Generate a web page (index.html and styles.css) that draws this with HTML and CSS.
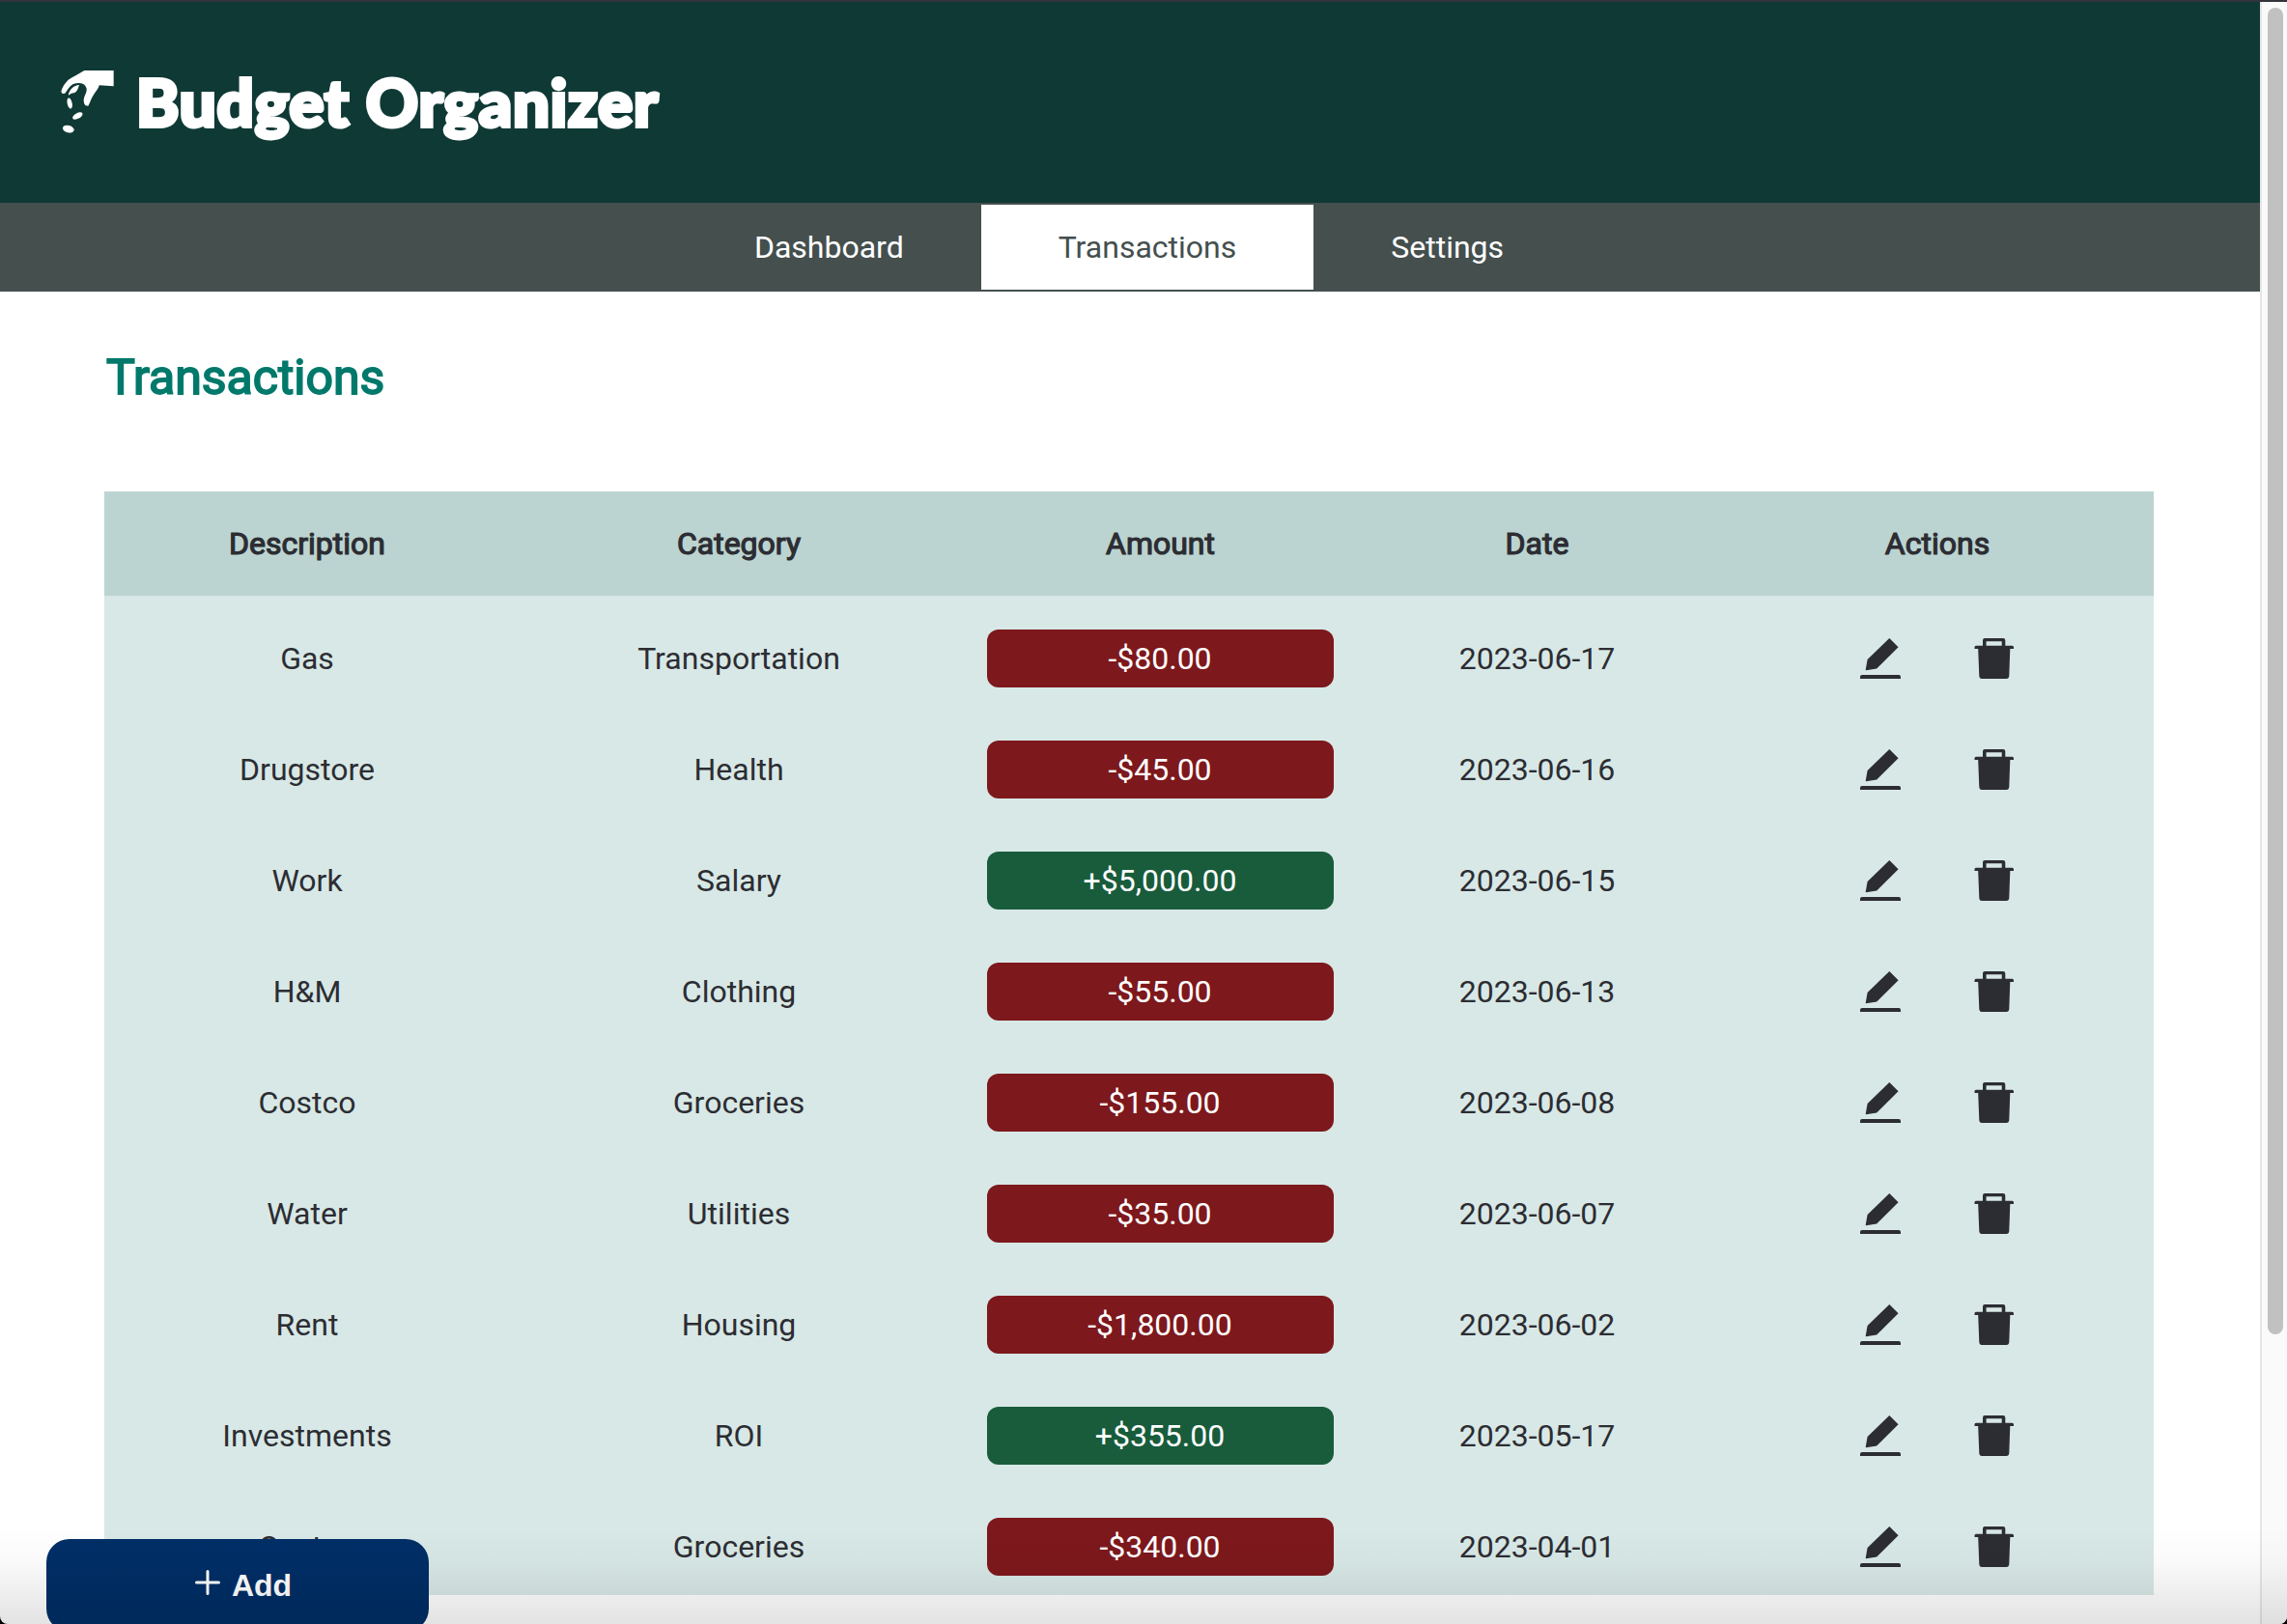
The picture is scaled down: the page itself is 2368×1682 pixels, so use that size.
FILE: index.html
```html
<!DOCTYPE html>
<html lang="en">
<head>
<meta charset="utf-8">
<title>Budget Organizer</title>
<link rel="stylesheet" href="styles.css">
</head>
<body>
<svg class="symbols" aria-hidden="true">
  <symbol id="pen" viewBox="0 0 42 42"><path d="M30.3 0 39.6 9.3 17.2 31.4 6.2 33.2 5.7 32.7 7.6 21.9z"/><path d="M2 38H40Q42 38 42 40V42H0V40Q0 38 2 38z"/></symbol>
  <symbol id="trash" viewBox="0 0 42 42"><path fill-rule="evenodd" d="M11 0H30Q32.3 0 32.3 2.300V7.700H39.500Q41 7.700 41 9.200V11H37.300L36.300 39Q36.100 42 33.500 42H8Q5.500 42 5.300 39L4.200 11H.5V9.200Q.5 7.700 2 7.700H9V2.300Q9 0 11 0zM12.600 3.200V7.700H28.700V3.200z"/></symbol>
</svg>
<div class="window">
  <div class="page">
    <header class="header">
      <svg class="logo" viewBox="0 0 240 270"><path d="M112 39H203V88L158 85C156 96 148 103 138 119C131 130 129 141 124 149L116 148C108 139 109 126 114 116C118 107 121 99 118 92C112 77 93 75 76 82C66 87 60 99 53 109C48 114 41 110 40 104C43 90 52 78 62 68C77 59 95 49 112 39z"/><path d="M63 111C68 98 79 85 96 84C93 94 89 107 79 109C73 109 68 113 63 116z"/><ellipse cx="66.500" cy="141" rx="7.500" ry="17" transform="rotate(-12 66.500 141)"/><ellipse cx="91" cy="180" rx="17" ry="8.500" transform="rotate(-28 91 180)"/><ellipse cx="62.500" cy="221" rx="18" ry="11" transform="rotate(14 62.500 221)"/></svg>
      <h1 class="brand">Budget Organizer</h1>
    </header>
    <nav class="nav">
      <a class="tab">Dashboard</a>
      <a class="tab active">Transactions</a>
      <a class="tab">Settings</a>
    </nav>
    <main class="main">
      <h2 class="title">Transactions</h2>
      <div class="table">
        <div class="row head"><span>Description</span><span>Category</span><span>Amount</span><span>Date</span><span>Actions</span></div>
        <div class="row"><span>Gas</span><span>Transportation</span><span class="amount out">-$80.00</span><span>2023-06-17</span><span class="actions"><svg><use href="#pen"/></svg><svg><use href="#trash"/></svg></span></div>
        <div class="row"><span>Drugstore</span><span>Health</span><span class="amount out">-$45.00</span><span>2023-06-16</span><span class="actions"><svg><use href="#pen"/></svg><svg><use href="#trash"/></svg></span></div>
        <div class="row"><span>Work</span><span>Salary</span><span class="amount in">+$5,000.00</span><span>2023-06-15</span><span class="actions"><svg><use href="#pen"/></svg><svg><use href="#trash"/></svg></span></div>
        <div class="row"><span>H&amp;M</span><span>Clothing</span><span class="amount out">-$55.00</span><span>2023-06-13</span><span class="actions"><svg><use href="#pen"/></svg><svg><use href="#trash"/></svg></span></div>
        <div class="row"><span>Costco</span><span>Groceries</span><span class="amount out">-$155.00</span><span>2023-06-08</span><span class="actions"><svg><use href="#pen"/></svg><svg><use href="#trash"/></svg></span></div>
        <div class="row"><span>Water</span><span>Utilities</span><span class="amount out">-$35.00</span><span>2023-06-07</span><span class="actions"><svg><use href="#pen"/></svg><svg><use href="#trash"/></svg></span></div>
        <div class="row"><span>Rent</span><span>Housing</span><span class="amount out">-$1,800.00</span><span>2023-06-02</span><span class="actions"><svg><use href="#pen"/></svg><svg><use href="#trash"/></svg></span></div>
        <div class="row"><span>Investments</span><span>ROI</span><span class="amount in">+$355.00</span><span>2023-05-17</span><span class="actions"><svg><use href="#pen"/></svg><svg><use href="#trash"/></svg></span></div>
        <div class="row"><span>Costco</span><span>Groceries</span><span class="amount out">-$340.00</span><span>2023-04-01</span><span class="actions"><svg><use href="#pen"/></svg><svg><use href="#trash"/></svg></span></div>
      </div>
    </main>
  </div>
  <div class="scrollbar"><div class="thumb"></div></div>
  <button class="add"><svg viewBox="0 0 26 26"><path d="M13 1.500V24.500M1.500 13H24.500"/></svg>Add</button>
  <div class="shade"></div>
</div>
</body>
</html>
```

FILE: styles.css
```css
* { box-sizing: border-box; }
body { margin: 0; background: #000; overflow: hidden; font-family: Roboto, sans-serif; font-size: 32px; color: #2c2d33; }
.symbols { display: none; }
.window { position: relative; display: flex; height: 1682px; overflow: hidden; background: #fff; border-top: 2px solid #33343c; border-radius: 0 0 8px 8px; }
.page { width: 2340px; }
.header { display: flex; align-items: flex-start; height: 208px; padding: 58px 50px 0; background: #0f3935; }
.logo { width: 80px; height: 90px; fill: #fff; }
.brand { margin: 0 0 0 11px; font: 900 67px/90px Lato, sans-serif; letter-spacing: .85px; color: #fff; -webkit-text-stroke: 4px #fff; white-space: nowrap; }
.nav { display: flex; justify-content: center; height: 92px; padding: 2px 2px 2px 0; background: #444f4e; }
.tab { display: flex; align-items: center; padding: 0 80px; color: #fff; }
.tab.active { background: #fff; color: #444f4e; }
.main { padding: 54px 110px 0 108px; }
.title { margin: 0; padding-left: 2px; height: 153px; font-size: 50px; line-height: 70px; font-weight: 400; color: #00796b; -webkit-text-stroke: 1.800px #00796b; }
.table { background: #d8e8e6; }
.row { display: grid; grid-template-columns: 420px 474px 399px 381px 448px; align-items: center; height: 115px; padding: 35px 0 20px; text-align: center; line-height: 60px; }
.row.head { height: 108px; padding: 0; background: #bcd4d1; -webkit-text-stroke: 1.200px #2c2d33; }
.amount { height: 60px; margin: 0 20px; padding-right: 1px; border-radius: 12px; color: #fff; }
.out { background: #7d181c; }
.in { background: #185c3c; }
.actions { display: flex; justify-content: center; gap: 76px; }
.actions svg { width: 42px; height: 42px; fill: #2c2d33; }
.scrollbar { width: 28px; padding: 6px 4px 0 6px; background: #fafafa; border-left: 2px solid #e5e5e5; }
.thumb { width: 16px; height: 1374px; border-radius: 8px; background: #c1c1c1; }
.add { position: absolute; left: 48px; top: 1592px; display: flex; align-items: center; justify-content: center; gap: 12px; width: 396px; height: 96px; border: 0; border-radius: 24px; background: #002e66; color: #fff; font: bold 32px "Liberation Sans", sans-serif; padding: 0 0 0 12px; }
.add svg { width: 26px; height: 26px; margin-top: -6px; fill: none; stroke: #fff; stroke-width: 3; stroke-linecap: round; }
.shade { position: absolute; inset: auto 0 0 0; height: 100px; background: linear-gradient(rgba(0,0,0,0), rgba(0,0,0,.02) 35%, rgba(0,0,0,.11)); }
```
